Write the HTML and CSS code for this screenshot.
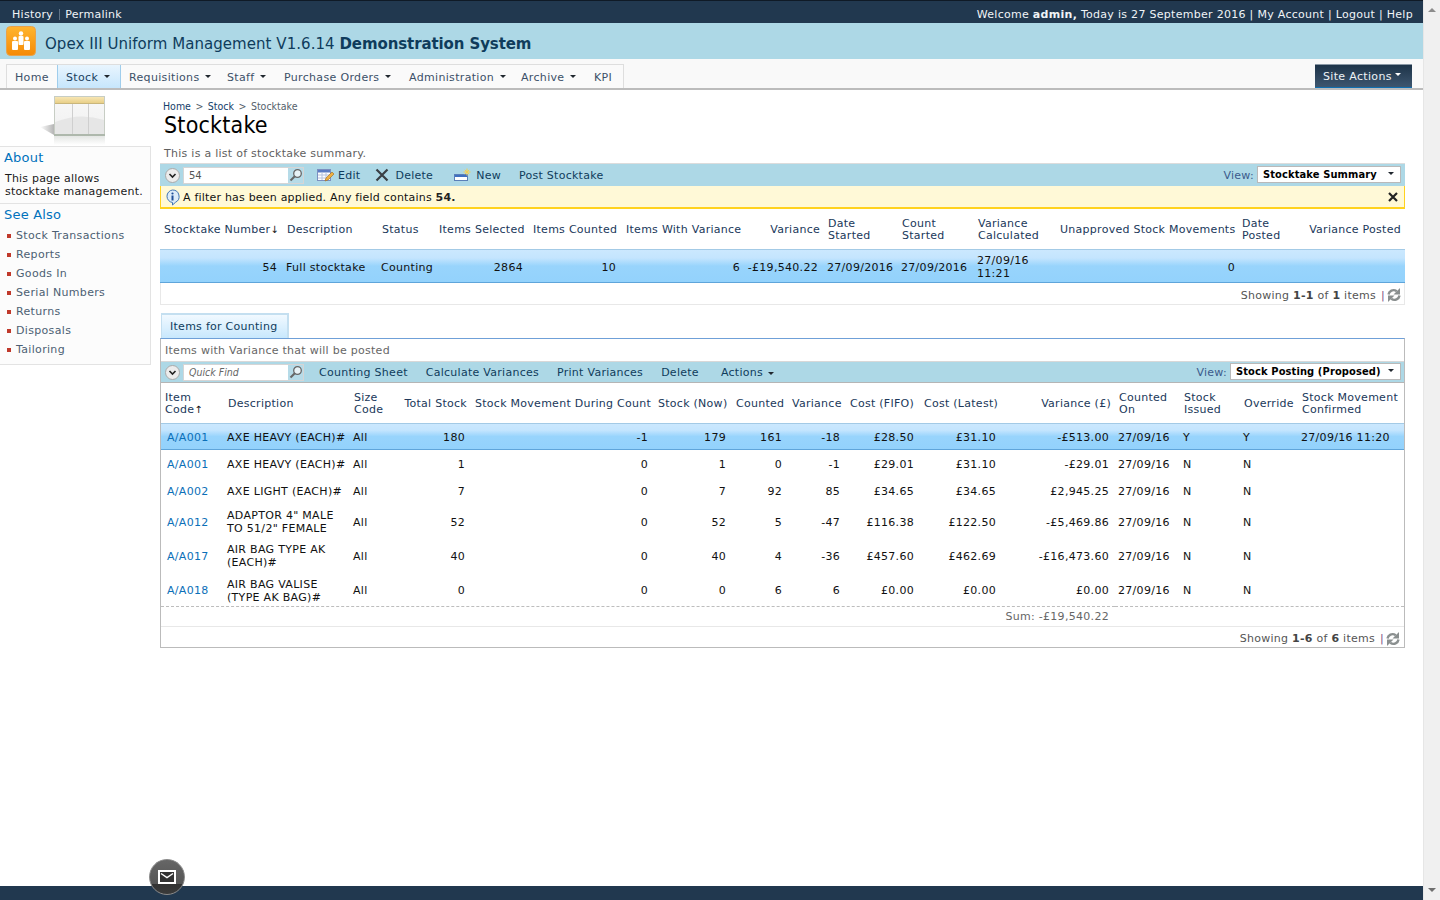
FILE: index.html
```html
<!DOCTYPE html>
<html lang="en">
<head>
<meta charset="utf-8">
<title>Stocktake</title>
<link rel="stylesheet" href="styles.css">
</head>
<body>
<div class="app">
  <div class="page">
    <header class="topbar">
      <div class="top-left"><a>History</a><span class="sep"></span><a>Permalink</a></div>
      <div class="top-right">Welcome <b>admin,</b> Today is 27 September 2016 | My Account | Logout | Help</div>
    </header>
    <div class="brand">
      <svg class="logo" width="30" height="30" viewBox="0 0 30 30">
        <defs><linearGradient id="lg" x1="0" y1="0" x2="0" y2="1"><stop offset="0" stop-color="#ffb52e"/><stop offset="1" stop-color="#f58a07"/></linearGradient></defs>
        <rect x="0.5" y="0.5" width="29" height="29" rx="4" fill="url(#lg)" stroke="#e8a24a"/>
        <circle cx="15" cy="7.5" r="2.2" fill="#fff"/><rect x="12.5" y="10" width="5" height="9" rx="1" fill="#fff"/>
        <circle cx="9" cy="12.5" r="2" fill="#fff"/><rect x="6" y="15" width="6" height="9" rx="1" fill="#fff"/>
        <circle cx="21" cy="12.5" r="2" fill="#fff"/><rect x="18" y="15" width="6" height="9" rx="1" fill="#fff"/>
      </svg>
      <div class="brand-title">Opex III Uniform Management V1.6.14 <b>Demonstration System</b></div>
    </div>
    <nav class="nav">
      <div class="tabs">
        <a class="tab t-home">Home</a>
        <a class="tab t-stock on">Stock<i class="caret"></i></a>
        <a class="tab t-req">Requisitions<i class="caret"></i></a>
        <a class="tab t-staff">Staff<i class="caret"></i></a>
        <a class="tab t-po">Purchase Orders<i class="caret"></i></a>
        <a class="tab t-adm">Administration<i class="caret"></i></a>
        <a class="tab t-arc">Archive<i class="caret"></i></a>
        <a class="tab t-kpi">KPI</a>
      </div>
      <a class="site-actions">Site Actions<i class="caret light"></i></a>
    </nav>
    <div class="content">
      <aside class="side">
        <div class="thumb">
          <svg width="66" height="50" viewBox="0 0 66 50">
            <defs>
              <linearGradient id="tb" x1="0" y1="0" x2="0" y2="1"><stop offset="0" stop-color="#f7e6b4"/><stop offset="1" stop-color="#e8cf88"/></linearGradient>
              <linearGradient id="pn" x1="0" y1="0" x2="0" y2="1"><stop offset="0" stop-color="#f8f8f8"/><stop offset="1" stop-color="#f0f0f0"/></linearGradient>
              <linearGradient id="sh" x1="1" y1="0" x2="0" y2="0"><stop offset="0" stop-color="#b5b5b5"/><stop offset="1" stop-color="#fff"/></linearGradient>
              <linearGradient id="rf" x1="0" y1="0" x2="0" y2="1"><stop offset="0" stop-color="#e4e6e4"/><stop offset="1" stop-color="#fff"/></linearGradient>
            </defs>
            <polygon points="14,28 14,39 0,31" fill="url(#sh)"/>
            <rect x="14" y="40" width="51" height="9" fill="url(#rf)"/>
            <rect x="14.500" y="0.500" width="50" height="38" fill="url(#pn)" stroke="#c7cdc4"/>
            <path d="M15 26Q40 16 64 24V38H15z" fill="#e6e6e6"/>
            <rect x="15" y="1" width="49" height="6" fill="url(#tb)"/>
            <line x1="15" y1="7.500" x2="64" y2="7.500" stroke="#c9b67c"/>
            <line x1="32.500" y1="8" x2="32.500" y2="38" stroke="#cfcfcf"/>
            <line x1="48.500" y1="8" x2="48.500" y2="38" stroke="#cfcfcf"/>
            <rect x="14" y="38" width="51" height="2" fill="#aeb8ac"/>
          </svg>
        </div>
        <div class="side-box">
          <h3>About</h3>
          <p>This page allows stocktake management.</p>
          <div class="side-rule"></div>
          <h3>See Also</h3>
          <ul>
            <li>Stock Transactions</li>
            <li>Reports</li>
            <li>Goods In</li>
            <li>Serial Numbers</li>
            <li>Returns</li>
            <li>Disposals</li>
            <li>Tailoring</li>
          </ul>
        </div>
      </aside>
      <main class="main">
        <div class="crumbs"><a>Home</a><span>&gt;</span><a>Stock</a><span>&gt;</span><em>Stocktake</em></div>
        <h1>Stocktake</h1>
        <p class="lead">This is a list of stocktake summary.</p>

        <div class="toolbar tb-first">
          <svg class="toggle" width="15" height="15" viewBox="0 0 15 15"><circle cx="7.500" cy="7.500" r="7" fill="#ececec" stroke="#aaa"/><path d="M4.500 6l3 3 3-3" fill="none" stroke="#222" stroke-width="1.600"/></svg>
          <div class="find"><span class="find-text">54</span>
            <span class="find-btn"><svg width="14" height="14" viewBox="0 0 14 14"><circle cx="8.500" cy="5.500" r="3.800" fill="#e8f2f6" stroke="#666" stroke-width="1.300"/><path d="M5.800 8.200L1.500 12.500" stroke="#666" stroke-width="2"/></svg></span></div>
          <svg class="ic ic-edit" width="17" height="15" viewBox="0 0 17 15"><rect x="0.500" y="1.500" width="13" height="11" fill="#fff" stroke="#7b8fc0"/><rect x="1" y="2" width="12" height="2.500" fill="#5b7cc4"/><path d="M1 7h12M1 10h12M5 4v8M9 4v8" stroke="#b4c2de"/><path d="M8 13l1-3 6-6 2 2-6 6z" fill="#f0b040" stroke="#9a6a20" stroke-width=".6"/></svg>
          <a class="tool">Edit</a>
          <svg class="ic ic-del" width="14" height="14" viewBox="0 0 14 14"><path d="M1.500 1.500l11 11M12.500 1.500l-11 11" stroke="#3a3f45" stroke-width="2.200"/></svg>
          <a class="tool">Delete</a>
          <svg class="ic ic-new" width="17" height="14" viewBox="0 0 17 14"><rect x="0.500" y="6.500" width="13" height="6" fill="#fff" stroke="#5a7fb8"/><rect x="1" y="7" width="12" height="2" fill="#3f6fc0"/><path d="M13 0.500v7M9.500 4h7M10.800 1.800l4.400 4.400M15.200 1.800l-4.400 4.400" stroke="#f5cf50"/></svg>
          <a class="tool">New</a>
          <a class="tool tl-post">Post Stocktake</a>
          <div class="view"><span class="view-label">View:</span><div class="select sel-a"><b>Stocktake Summary</b><i class="caret dark"></i></div></div>
        </div>
        <div class="notice">
          <svg width="17" height="17" viewBox="0 0 17 17"><path d="M8.500 1a6.500 6.500 0 0 1 3 12.300L8.500 16v-2.500A6.300 6.300 0 0 1 8.500 1z" fill="#dcecfa" stroke="#3f74b5"/><circle cx="8.500" cy="4.500" r="1.100" fill="#1f4f98"/><rect x="7.500" y="6.500" width="2" height="5" fill="#1f4f98"/></svg>
          <span>A filter has been applied. Any field contains <b>54.</b></span>
          <svg class="notice-x" width="10" height="10" viewBox="0 0 10 10"><path d="M1 1l8 8M9 1l-8 8" stroke="#222" stroke-width="2.200"/></svg>
        </div>

        <table class="grid g1">
          <colgroup><col class="a1"><col class="a2"><col class="a3"><col class="a4"><col class="a5"><col class="a6"><col class="a7"><col class="a8"><col class="a9"><col class="a10"><col class="a11"><col class="a12"><col class="a13"></colgroup>
          <thead><tr>
            <th>Stocktake Number<span class="arrow">↓</span></th><th>Description</th><th>Status</th><th>Items Selected</th><th>Items Counted</th><th>Items With Variance</th><th class="r">Variance</th><th>Date<br>Started</th><th>Count<br>Started</th><th>Variance<br>Calculated</th><th>Unapproved Stock Movements</th><th>Date<br>Posted</th><th class="r">Variance Posted</th>
          </tr></thead>
          <tbody><tr class="sel">
            <td class="r">54</td><td>Full stocktake</td><td>Counting</td><td class="r">2864</td><td class="r">10</td><td class="r">6</td><td class="r">-£19,540.22</td><td>27/09/2016</td><td>27/09/2016</td><td>27/09/16<br>11:21</td><td class="r tight">0</td><td></td><td></td>
          </tr></tbody>
        </table>
        <div class="pager p1"><span>Showing <b>1-1</b> of <b>1</b> items</span><span class="bar">|</span><svg width="14" height="16" viewBox="0 0 14 16"><path d="M1.500 7.500C2 4 6 1.800 9.800 4.200" fill="none" stroke="#8a8f8f" stroke-width="2.400"/><path d="M13 1v6.500H6.500z" fill="#8a8f8f"/><path d="M12.500 8.500C12 12 8 14.200 4.200 11.800" fill="none" stroke="#8a8f8f" stroke-width="2.400"/><path d="M1 15V8.500h6.500z" fill="#8a8f8f"/></svg></div>

        <div class="tabrow"><div class="subtab">Items for Counting</div></div>
        <section class="box">
          <div class="box-desc">Items with Variance that will be posted</div>
          <div class="toolbar tb-second">
            <svg class="toggle" width="15" height="15" viewBox="0 0 15 15"><circle cx="7.500" cy="7.500" r="7" fill="#ececec" stroke="#aaa"/><path d="M4.500 6l3 3 3-3" fill="none" stroke="#222" stroke-width="1.600"/></svg>
            <div class="find"><span class="find-text ph">Quick Find</span>
              <span class="find-btn"><svg width="14" height="14" viewBox="0 0 14 14"><circle cx="8.500" cy="5.500" r="3.800" fill="#e8f2f6" stroke="#666" stroke-width="1.300"/><path d="M5.800 8.200L1.500 12.500" stroke="#666" stroke-width="2"/></svg></span></div>
            <a class="tool s1">Counting Sheet</a>
            <a class="tool s2">Calculate Variances</a>
            <a class="tool s2">Print Variances</a>
            <a class="tool s2">Delete</a>
            <a class="tool s3">Actions<i class="caret"></i></a>
            <div class="view"><span class="view-label">View:</span><div class="select sel-b"><b>Stock Posting (Proposed)</b><i class="caret dark"></i></div></div>
          </div>
          <table class="grid g2">
            <colgroup><col class="b1"><col class="b2"><col class="b3"><col class="b4"><col class="b5"><col class="b6"><col class="b7"><col class="b8"><col class="b9"><col class="b10"><col class="b11"><col class="b12"><col class="b13"><col class="b14"><col class="b15"></colgroup>
            <thead><tr>
              <th>Item<br>Code<span class="arrow">↑</span></th><th>Description</th><th>Size<br>Code</th><th class="r">Total Stock</th><th>Stock Movement During Count</th><th>Stock (Now)</th><th>Counted</th><th>Variance</th><th>Cost (FIFO)</th><th>Cost (Latest)</th><th class="r">Variance (£)</th><th>Counted<br>On</th><th>Stock<br>Issued</th><th>Override</th><th>Stock Movement<br>Confirmed</th>
            </tr></thead>
            <tbody>
              <tr class="sel h27"><td class="code">A/A001</td><td>AXE HEAVY (EACH)#</td><td>All</td><td class="r">180</td><td class="r">-1</td><td class="r">179</td><td class="r">161</td><td class="r">-18</td><td class="r">£28.50</td><td class="r">£31.10</td><td class="r">-£513.00</td><td>27/09/16</td><td>Y</td><td>Y</td><td>27/09/16 11:20</td></tr>
              <tr class="h27"><td class="code">A/A001</td><td>AXE HEAVY (EACH)#</td><td>All</td><td class="r">1</td><td class="r">0</td><td class="r">1</td><td class="r">0</td><td class="r">-1</td><td class="r">£29.01</td><td class="r">£31.10</td><td class="r">-£29.01</td><td>27/09/16</td><td>N</td><td>N</td><td></td></tr>
              <tr class="h28"><td class="code">A/A002</td><td>AXE LIGHT (EACH)#</td><td>All</td><td class="r">7</td><td class="r">0</td><td class="r">7</td><td class="r">92</td><td class="r">85</td><td class="r">£34.65</td><td class="r">£34.65</td><td class="r">£2,945.25</td><td>27/09/16</td><td>N</td><td>N</td><td></td></tr>
              <tr class="h34"><td class="code">A/A012</td><td>ADAPTOR 4" MALE TO 51/2" FEMALE</td><td>All</td><td class="r">52</td><td class="r">0</td><td class="r">52</td><td class="r">5</td><td class="r">-47</td><td class="r">£116.38</td><td class="r">£122.50</td><td class="r">-£5,469.86</td><td>27/09/16</td><td>N</td><td>N</td><td></td></tr>
              <tr class="h34"><td class="code">A/A017</td><td>AIR BAG TYPE AK (EACH)#</td><td>All</td><td class="r">40</td><td class="r">0</td><td class="r">40</td><td class="r">4</td><td class="r">-36</td><td class="r">£457.60</td><td class="r">£462.69</td><td class="r">-£16,473.60</td><td>27/09/16</td><td>N</td><td>N</td><td></td></tr>
              <tr class="h33"><td class="code">A/A018</td><td>AIR BAG VALISE (TYPE AK BAG)#</td><td>All</td><td class="r">0</td><td class="r">0</td><td class="r">0</td><td class="r">6</td><td class="r">6</td><td class="r">£0.00</td><td class="r">£0.00</td><td class="r">£0.00</td><td>27/09/16</td><td>N</td><td>N</td><td></td></tr>
            </tbody>
            <tfoot><tr><td colspan="11" class="r">Sum: -£19,540.22</td><td colspan="4"></td></tr></tfoot>
          </table>
          <div class="pager p2"><span>Showing <b>1-6</b> of <b>6</b> items</span><span class="bar">|</span><svg width="14" height="16" viewBox="0 0 14 16"><path d="M1.500 7.500C2 4 6 1.800 9.800 4.200" fill="none" stroke="#8a8f8f" stroke-width="2.400"/><path d="M13 1v6.500H6.500z" fill="#8a8f8f"/><path d="M12.500 8.500C12 12 8 14.200 4.200 11.800" fill="none" stroke="#8a8f8f" stroke-width="2.400"/><path d="M1 15V8.500h6.500z" fill="#8a8f8f"/></svg></div>
        </section>
      </main>
    </div>
    <footer class="footer"></footer>
    <button class="mail" type="button" aria-label="Messages"><svg width="18" height="14" viewBox="0 0 18 14"><rect x="1" y="1" width="16" height="12" fill="#333" stroke="#fff" stroke-width="2"/><path d="M3 3.500l6 4 6-4" fill="none" stroke="#fff" stroke-width="1.500"/></svg></button>
  </div>
  <div class="scrollbar">
    <i class="sb-up"></i>
    <i class="sb-down"></i>
  </div>
</div>
</body>
</html>
```
FILE: styles.css
```css
* { box-sizing: border-box; }
html, body { margin: 0; padding: 0; height: 100%; overflow: hidden; }
body { font: 11px/13px "DejaVu Sans", Verdana, sans-serif; letter-spacing: .27px; color: #1a1a1a; background: #fff; }
a { color: inherit; text-decoration: none; }
.app { display: flex; height: 900px; }
.page { position: relative; flex: 1; min-width: 0; display: flex; flex-direction: column; }

/* scrollbar */
.scrollbar { width: 17px; background: #f0f0f0; border-left: 1px solid #e6e6e6; display: flex; flex-direction: column; justify-content: space-between; align-items: center; padding: 8px 0 8px; }
.sb-up { width: 0; height: 0; border: 4px solid transparent; border-top: 0; border-bottom: 4px solid #8c8c8c; }
.sb-down { width: 0; height: 0; border: 4px solid transparent; border-bottom: 0; border-top: 4px solid #6f6f6f; }

/* top */
.topbar { height: 23px; background: #21384f; border-top: 1px solid #0f1a26; color: #f0f4f7; display: flex; justify-content: space-between; align-items: center; padding: 5px 10px 0 12px; letter-spacing: .29px; }
.top-left { display: flex; align-items: center; }
.sep { width: 1px; height: 11px; background: #5f7386; margin: 0 5px 0 6px; }
.brand { height: 36px; background: #add8e6; display: flex; align-items: center; padding-left: 6px; color: #0f3c5c; }
.logo { flex: none; }
.brand-title { margin-left: 9px; padding-top: 6px; font-size: 15px; line-height: 20px; letter-spacing: .05px; white-space: nowrap; }
.brand-title b { letter-spacing: -.1px; }

/* nav */
.nav { height: 31px; background: #f9f9f9; border-bottom: 2px solid #bcbcbc; padding: 5px 11px 0 6px; display: flex; justify-content: space-between; align-items: stretch; letter-spacing: .33px; }
.tabs { display: flex; border: 1px solid #dedede; border-bottom: 0; background: #fafafa; }
.tab { display: flex; align-items: center; color: #3c5068; padding: 2px 0 0 8px; white-space: nowrap; }
.t-home { width: 50px; }
.t-stock { width: 64px; }
.t-req { width: 98px; }
.t-staff { width: 57px; }
.t-po { width: 125px; }
.t-adm { width: 112px; }
.t-arc { width: 73px; }
.t-kpi { width: 37px; }
.tab.on { background: linear-gradient(#e9f5fe, #c6e6fc); border-left: 1px solid #9fcdec; border-right: 1px solid #9fcdec; color: #1b3f5e; }
.caret { display: inline-block; width: 0; height: 0; margin-left: 6px; border: 3px solid transparent; border-bottom: 0; border-top: 3px solid #20272e; position: relative; top: -1px; }
.caret.light { border-top-color: #fff; margin-left: 3px; top: -2px; }
.site-actions { width: 97px; background: linear-gradient(#1e3449, #3d566f); border-bottom: 1px solid #0f6fb0; border-top: 1px solid #8a98a5; color: #eef3f6; display: flex; align-items: center; padding-left: 8px; }

/* content */
.content { flex: 1; display: flex; min-height: 0; }
.side { width: 151px; flex: none; }
.thumb { height: 56px; padding: 6px 0 0 40px; }
.thumb svg { display: block; }
.side-box { height: 219px; background: #fcfcfc; border: 1px solid #e3e3e3; border-left: 0; padding-top: 3px; }
.side-box h3 { margin: 0; padding-left: 4px; font-size: 13px; line-height: 15px; font-weight: normal; color: #0072bc; letter-spacing: .2px; }
.side-box p { margin: 7px 0 5px; padding-left: 5px; color: #1a1a1a; line-height: 13px; letter-spacing: .2px; }
.side-rule { height: 1px; background: #e3e3e3; margin-bottom: 3px; }
.side-box ul { list-style: none; margin: 7px 0 0; padding: 0 0 0 16px; }
.side-box li { position: relative; height: 19px; line-height: 13px; color: #4c5f73; letter-spacing: .33px; }
.side-box li::before { content: ""; position: absolute; left: -9px; top: 5px; width: 4px; height: 4px; background: #c0392b; }

.main { flex: 1; min-width: 0; margin: 0 18px 0 9px; padding-top: 10px; }
.crumbs { font-family: "DejaVu Sans Condensed", "DejaVu Sans", sans-serif; font-stretch: condensed; font-size: 10.5px; letter-spacing: 0; line-height: 12px; padding-left: 3px; color: #15406a; display: flex; gap: 4.5px; }
.crumbs span, .crumbs em { color: #555f6b; font-style: normal; }
h1 { margin: 0; padding-left: 4px; font: normal 23px/27px "DejaVu Sans Condensed", "DejaVu Sans", sans-serif; font-stretch: condensed; letter-spacing: .2px; color: #000; }
.lead { margin: 9px 0 3px; padding-left: 4px; line-height: 12px; color: #5f5f5f; }

/* toolbars */
.toolbar { display: flex; align-items: center; background: #add8e6; color: #0f3c5c; white-space: nowrap; }
.tb-first { height: 23px; border-top: 1px solid #dcdcdc; padding: 0 4px 0 5px; }
.tb-second { height: 22px; border-top: 1px solid #d8d8d8; border-bottom: 1px solid #b5b5b5; padding: 0 3px 0 4px; }
.toggle { flex: none; margin-right: 3px; }
.find { width: 121px; height: 17px; background: #fff; border: 1px solid #d5d5d5; display: flex; align-items: center; justify-content: space-between; padding-left: 5px; flex: none; }
.find-text { font-size: 10px; letter-spacing: 0; color: #555; }
.find-text.ph { font-family: "DejaVu Sans Condensed", "DejaVu Sans", sans-serif; font-stretch: condensed; font-size: 10.5px; font-style: italic; color: #666; }
.find-btn { width: 15px; height: 15px; background: #b6dbe8; display: flex; align-items: center; justify-content: center; }
.ic { flex: none; }
.ic-edit { margin: 0 4px 0 13px; }
.ic-del { margin: 0 6px 0 15px; }
.ic-new { margin: 0 5px 0 21px; }
.tl-post { margin-left: 18px; }
.s1 { margin-left: 15px; }
.s2 { margin-left: 18px; }
.s3 { margin-left: 22px; }
.s3 .caret { margin-left: 5px; }
.view { margin-left: auto; display: flex; align-items: center; gap: 3px; }
.view-label { color: #3b5a8c; }
.select { height: 17px; background: #fff; border: 1px solid #b9b9b9; display: flex; align-items: center; justify-content: space-between; padding: 0 6px 0 5px; margin-bottom: 2px; color: #000; }
.select b { font-family: "DejaVu Sans Condensed", "DejaVu Sans", sans-serif; font-stretch: condensed; font-size: 11px; letter-spacing: .12px; }
.sel-a { width: 144px; }
.sel-b { width: 171px; }
.select .caret { margin: 0; }
.notice { height: 23px; background: #fff9d7; border: 1px solid #ffd21f; border-top: 0; border-bottom-width: 2px; display: flex; align-items: center; padding: 1px 6px 0 3px; color: #111; gap: 2px; letter-spacing: .2px; }
.notice b { color: #222; }
.notice-x { margin-left: auto; }

/* grids */
.grid { border-collapse: separate; border-spacing: 0; table-layout: fixed; }
.g1 { width: 1245px; margin-top: 3px; }
.g2 { width: 1243px; }
.a1 { width: 123px; } .a2 { width: 95px; } .a3 { width: 57px; } .a4 { width: 94px; } .a5 { width: 93px; } .a6 { width: 124px; } .a7 { width: 78px; } .a8 { width: 74px; } .a9 { width: 76px; } .a10 { width: 82px; } .a11 { width: 182px; } .a12 { width: 67px; } .a13 { width: 100px; }
.b1 { width: 63px; } .b2 { width: 126px; } .b3 { width: 49px; } .b4 { width: 72px; } .b5 { width: 183px; } .b6 { width: 78px; } .b7 { width: 56px; } .b8 { width: 58px; } .b9 { width: 74px; } .b10 { width: 82px; } .b11 { width: 113px; } .b12 { width: 65px; } .b13 { width: 60px; } .b14 { width: 58px; } .b15 { width: 106px; }
.grid th { font-weight: normal; text-align: left; vertical-align: middle; padding: 0 0 2px 4px; line-height: 12px; color: #20385a; white-space: nowrap; }
.g2 th { padding: 2px 0 0 4px; }
.grid td { padding: 0 0 0 3px; vertical-align: middle; line-height: 13px; color: #111; letter-spacing: .3px; }
.grid td.r { text-align: right; padding: 0 6px 0 0; white-space: nowrap; }
.grid td.tight { padding-right: 3px; }
.grid th.r { text-align: right; padding-right: 4px; }
.arrow { font-size: 10px; letter-spacing: 0; color: #111; }
.g1 thead tr { height: 37px; }
.g1 tbody tr { height: 34px; }
.g2 thead tr { height: 40px; }
.sel td { background: linear-gradient(#cbe8fe 0, #c4e5fe 25%, #98d4fc 50%, #93d2fc 100%); border-top: 1px solid #a3cae6; border-bottom: 1px solid #5fa5da; }
.grid .sel td, .grid .h27 td, .grid .h33 td { padding-top: 2px; }
.grid td.code { color: #0b6fb8; padding-left: 6px; }
.h27 { height: 27px; }
.h28 { height: 28px; }
.h34 { height: 34px; }
.h33 { height: 33px; }
.grid tfoot td { height: 21px; padding-top: 4px; color: #666; border-top: 1px dashed #bdbdbd; border-bottom: 1px solid #e8e8e8; }

.pager { height: 22px; display: flex; align-items: center; justify-content: flex-end; padding: 3px 4px 0 0; color: #555; }
.pager b { color: #444; }
.bar { margin: 0 2px 0 5px; color: #7a4f85; }
.p1 { border: 1px solid #e8e8e8; border-top: 0; padding-right: 3px; }
.p2 { height: 20px; }

.tabrow { margin-top: 8px; height: 25px; padding-left: 1px; display: flex; }
.subtab { width: 128px; background: linear-gradient(#f1f9ff, #c8e8fd); border: 2px solid #c4dff0; border-bottom: 0; border-left-width: 1px; color: #0f3c5c; display: flex; align-items: center; padding-left: 8px; }
.box { border: 1px solid #bbb; border-top-color: #6fa0d8; }
.box-desc { height: 22px; line-height: 24px; padding-left: 4px; color: #666; }

/* footer */
.footer { height: 14px; background: #21384f; flex: none; }
.mail { position: absolute; left: 149px; top: 859px; width: 36px; height: 36px; border-radius: 50%; padding: 0; background: linear-gradient(#666 0, #555 72%, #333 72%, #3a3a3a 100%); border: 1px solid #8a8a8a; display: flex; align-items: center; justify-content: center; }
```
